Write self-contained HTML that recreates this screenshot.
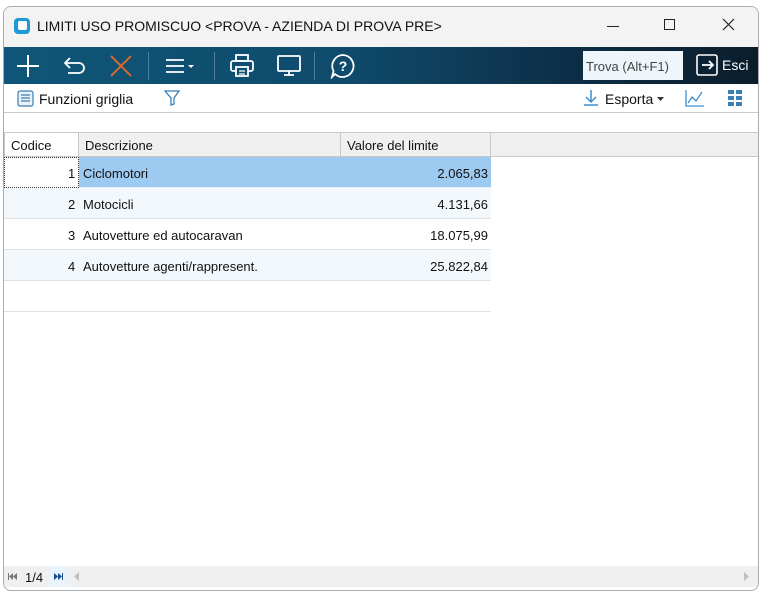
<!DOCTYPE html>
<html><head><meta charset="utf-8">
<style>
*{margin:0;padding:0;box-sizing:border-box}
body{width:762px;height:595px;background:#fff;font-family:"Liberation Sans",sans-serif;position:relative;overflow:hidden}
.win{position:absolute;left:3px;top:6px;width:756px;height:585px;border:1px solid #a8acb2;border-radius:8px;background:#fff;overflow:hidden}
.title{position:absolute;left:0;top:0;width:100%;height:40px;background:#f3f3f3}
.title .t{position:absolute;left:33px;top:11px;font-size:14px;color:#111}
.tb{position:absolute;left:0;top:40px;width:100%;height:37px;background:linear-gradient(90deg,#0f5678 0%,#0f4b6c 45%,#0c2a40 80%,#0b1d2c 100%)}
.tb2{position:absolute;left:0;top:77px;width:100%;height:29px;background:#fff;border-bottom:1px solid #c8c8c8}
.abs{position:absolute}
.sep{position:absolute;top:5px;width:1px;height:28px;background:#4f7f9c}
.grid{position:absolute;left:0;top:125px;width:755px}
.hdr{position:absolute;top:0;height:25px;background:#f0f0f0;border:1px solid #c8c8c8;border-left:none;font-size:13px;color:#111;padding:5px 0 0 6px}
.row{position:absolute;left:0;width:487px;height:31px;border-bottom:1px solid #dfe3e8;font-size:13px;color:#111}
.row span{position:absolute;top:9px}
</style></head><body>
<div class="win">
 <div class="title">
  <svg class="abs" style="left:9px;top:10px" width="18" height="18"><rect x="1" y="1" width="16" height="16" rx="4" fill="#1e9ad6"/><rect x="5" y="4" width="9" height="9" rx="2" fill="#fff"/></svg>
  <div class="t">LIMITI USO PROMISCUO &lt;PROVA - AZIENDA DI PROVA PRE&gt;</div>
  <div class="abs" style="left:603px;top:19px;width:12px;height:1px;background:#222"></div>
  <div class="abs" style="left:660px;top:12px;width:11px;height:11px;border:1px solid #222"></div>
  <svg class="abs" style="left:718px;top:11px" width="13" height="13"><path d="M1 1L12 12M12 1L1 12" stroke="#222" stroke-width="1.2"/></svg>
 </div>
 <div class="tb">
  <svg class="abs" style="left:12px;top:7px" width="24" height="24"><path d="M12 1V23M1 12H23" stroke="#fff" stroke-width="2"/></svg>
  <svg class="abs" style="left:58px;top:8px" width="26" height="22"><path d="M8 3L3 8L8 13M3 8H17a5 5 0 0 1 0 10H6" fill="none" stroke="#fff" stroke-width="1.8"/></svg>
  <svg class="abs" style="left:106px;top:8px" width="22" height="22"><path d="M1 1L21 21M21 1L1 21" stroke="#d9682f" stroke-width="2"/></svg>
  <div class="sep" style="left:144px"></div>
  <svg class="abs" style="left:161px;top:10px" width="36" height="18"><path d="M1 3H19M1 9H19M1 15H19" stroke="#fff" stroke-width="1.8"/><path d="M23 8H29L26 11Z" fill="#fff"/></svg>
  <div class="sep" style="left:210px"></div>
  <svg class="abs" style="left:225px;top:6px" width="26" height="26"><rect x="7" y="2" width="12" height="6" fill="none" stroke="#fff" stroke-width="1.8"/><rect x="2" y="8" width="22" height="10" rx="2" fill="none" stroke="#fff" stroke-width="1.8"/><rect x="7" y="14" width="12" height="9" fill="#0f4f70" stroke="#fff" stroke-width="1.8"/><path d="M10 18H16M10 21H16" stroke="#fff" stroke-width="1.2"/></svg>
  <svg class="abs" style="left:272px;top:7px" width="26" height="24"><rect x="2" y="2" width="22" height="15" rx="1" fill="none" stroke="#fff" stroke-width="1.8"/><path d="M13 17V21M8 21H18" stroke="#fff" stroke-width="1.8"/></svg>
  <div class="sep" style="left:310px"></div>
  <svg class="abs" style="left:326px;top:6px" width="26" height="26"><path d="M13 2a11 11 0 1 1-8 19L2 24L3.5 18A11 11 0 0 1 13 2Z" fill="none" stroke="#fff" stroke-width="1.8"/><text x="13" y="18" font-size="14" font-weight="bold" fill="#fff" text-anchor="middle" font-family="Liberation Sans">?</text></svg>
  <div class="abs" style="left:579px;top:4px;width:100px;height:29px;background:#eef6fb;font-size:13px;color:#444;padding:8px 0 0 3px">Trova (Alt+F1)</div>
  <svg class="abs" style="left:691px;top:6px" width="24" height="24"><rect x="2" y="2" width="20" height="20" rx="2" fill="none" stroke="#fff" stroke-width="1.6"/><path d="M7 12H18M14 8L18 12L14 16" fill="none" stroke="#fff" stroke-width="1.8"/></svg>
  <div class="abs" style="left:718px;top:10px;font-size:14px;color:#fff">Esci</div>
 </div>
 <div class="tb2">
  <svg class="abs" style="left:13px;top:6px" width="17" height="17"><rect x="1" y="1" width="15" height="15" rx="2" fill="#e8f1f8" stroke="#3c7fb3" stroke-width="1.2"/><path d="M4 5H13M4 8H13M4 11H13" stroke="#3c7fb3" stroke-width="1.2"/></svg>
  <div class="abs" style="left:35px;top:7px;font-size:14px;color:#111">Funzioni griglia</div>
  <svg class="abs" style="left:159px;top:5px" width="18" height="18"><path d="M2 2H16L11 9V15L8 16V9Z" fill="none" stroke="#3c7fb3" stroke-width="1.3"/></svg>
  <svg class="abs" style="left:578px;top:5px" width="18" height="18"><path d="M9 1V13M4 8L9 13L14 8M2 16H16" fill="none" stroke="#3c8fd0" stroke-width="1.5"/></svg>
  <div class="abs" style="left:601px;top:7px;font-size:14px;color:#111">Esporta</div>
  <svg class="abs" style="left:653px;top:13px" width="8" height="5"><path d="M0 0H7L3.5 4Z" fill="#333"/></svg>
  <svg class="abs" style="left:681px;top:5px" width="20" height="18"><path d="M1 1V17H19M3 14L7 8L11 12L17 3" fill="none" stroke="#3c8fd0" stroke-width="1.3"/></svg>
  <svg class="abs" style="left:724px;top:6px" width="15" height="16"><g fill="#3c7fb3"><rect x="0" y="0" width="6" height="4"/><rect x="8" y="0" width="6" height="4"/><rect x="0" y="6" width="6" height="4"/><rect x="8" y="6" width="6" height="4"/><rect x="0" y="12" width="6" height="4"/><rect x="8" y="12" width="6" height="4"/></g></svg>
 </div>
 <div class="grid">
  <div class="hdr" style="left:0;width:75px;border-left:1px solid #c8c8c8;background:#fff">Codice</div>
  <div class="hdr" style="left:75px;width:262px">Descrizione</div>
  <div class="hdr" style="left:337px;width:150px">Valore del limite</div>
  <div class="hdr" style="left:487px;width:268px;border-right:none"></div>
  <div class="row" style="top:25px;background:#9dcaf1;border-bottom-color:#e4eef7"><div class="abs" style="left:0;top:0;width:75px;height:31px;background:#fff;border:1px dotted #333"></div><span style="left:64px">1</span><span style="left:79px">Ciclomotori</span><span style="right:3px">2.065,83</span></div>
  <div class="row" style="top:56px;background:#f3f8fd"><span style="left:64px">2</span><span style="left:79px">Motocicli</span><span style="right:3px">4.131,66</span></div>
  <div class="row" style="top:87px"><span style="left:64px">3</span><span style="left:79px">Autovetture ed autocaravan</span><span style="right:3px">18.075,99</span></div>
  <div class="row" style="top:118px;background:#f3f8fd"><span style="left:64px">4</span><span style="left:79px">Autovetture agenti/rappresent.</span><span style="right:3px">25.822,84</span></div>
  <div class="row" style="top:149px"></div>
 </div>
 <div class="abs" style="left:0;top:559px;width:756px;height:21px;background:#f0f0f0;font-size:13px;color:#111">
  <svg class="abs" style="left:4px;top:7px" width="9" height="7"><path d="M0.5 0V7" stroke="#777"/><path d="M5 0V7L1 3.5Z M9 0V7L5 3.5Z" fill="#777"/></svg>
  <div class="abs" style="left:21px;top:4px">1/4</div>
  <div class="abs" style="left:46px;top:0;width:19px;height:21px;background:#e8f3fb"></div>
  <svg class="abs" style="left:50px;top:7px" width="9" height="7"><path d="M0 0V7L4 3.5Z M4 0V7L8 3.5Z" fill="#1a4a8a"/><path d="M8.5 0V7" stroke="#1a4a8a"/></svg>
  <svg class="abs" style="left:70px;top:6px" width="6" height="9"><path d="M5 0V9L0 4.5Z" fill="#c0c0c0"/></svg>
  <svg class="abs" style="left:740px;top:6px" width="6" height="9"><path d="M0 0V9L5 4.5Z" fill="#c0c0c0"/></svg>
 </div>
</div>
</body></html>
